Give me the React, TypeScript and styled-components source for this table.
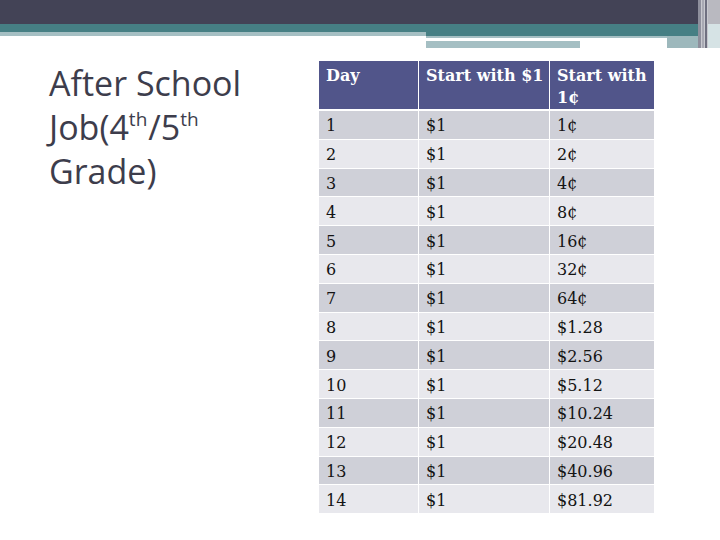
import React from "react";
import styled, { createGlobalStyle } from "styled-components";

const GlobalStyle = createGlobalStyle`
  html, body {
    margin: 0;
    padding: 0;
    background: #ffffff;
  }
  body {
    width: 720px;
    height: 540px;
    overflow: hidden;
  }
`;

const Slide = styled.div`
  width: 720px;
  height: 540px;
  background: #ffffff;
  display: flex;
  flex-direction: column;
`;

const Banner = styled.svg`
  display: block;
  width: 720px;
  height: 48px;
  flex: none;
`;

const Body = styled.main`
  display: grid;
  grid-template-columns: 270px 335px;
  padding: 13px 0 0 49px;
`;

const Title = styled.h1`
  margin: 0;
  width: 240px;
  font-family: "Open Sans", "DejaVu Sans", sans-serif;
  font-weight: 400;
  font-size: 34px;
  line-height: 44px;
  color: #3d3d4c;
`;

const Sup = styled.span`
  display: inline-block;
  font-size: 19px;
  line-height: 19px;
  vertical-align: 14px;
  margin-right: 1px;
`;

const Table = styled.div`
  display: grid;
  grid-template-columns: 99px 130px 104px;
  grid-template-rows: 49px;
  grid-auto-rows: 27.8px;
  column-gap: 1px;
  row-gap: 1px;
  align-content: start;
`;

const HeadCell = styled.div`
  align-self: start;
  height: 48px;
  box-sizing: border-box;
  padding: 4px 4px 0 7px;
  background: #51558a;
  color: #ffffff;
  font-family: "DejaVu Serif", "Liberation Serif", serif;
  font-weight: 700;
  font-size: 16px;
  line-height: 22px;
`;

const Cell = styled.div<{ $odd: boolean }>`
  display: flex;
  align-items: center;
  padding: 2px 7px 0;
  background: ${(p) => (p.$odd ? "#cfd0d8" : "#e8e8ed")};
  color: #141414;
  font-family: "DejaVu Serif", "Liberation Serif", serif;
  font-size: 16px;
`;

const TopBanner = () => (
  <Banner viewBox="0 0 720 48">
    <rect x="0" y="0" width="720" height="24" fill="#434356" />
    <rect x="0" y="24" width="720" height="8" fill="#467f84" />
    <rect x="0" y="32" width="426" height="4" fill="#a5bfc3" />
    <rect x="426" y="32" width="272" height="4" fill="#467f84" />
    <rect x="426" y="36" width="241" height="2" fill="#a5bfc3" />
    <rect x="426" y="38" width="241" height="3" fill="#ffffff" />
    <rect x="426" y="41" width="154" height="7" fill="#a5bfc3" />
    <rect x="667" y="36" width="31" height="12" fill="#9db8bc" />
    <rect x="698" y="0" width="22" height="48" fill="#c8c9cf" />
    <rect x="698" y="0" width="3" height="48" fill="#8e8f9c" />
    <rect x="702" y="0" width="2" height="48" fill="#a8a9b3" />
    <rect x="705" y="0" width="2" height="48" fill="#6f7080" />
    <rect x="708" y="0" width="12" height="24" fill="#b9b9c0" />
    <rect x="708" y="24" width="12" height="24" fill="#d6e3e5" />
  </Banner>
);

const penny = (day: number) => {
  const cents = Math.pow(2, day - 1);
  return cents < 100 ? `${cents}¢` : `$${(cents / 100).toFixed(2)}`;
};

const days = Array.from({ length: 14 }, (_, i) => i + 1);

export default function App() {
  return (
    <>
      <GlobalStyle />
      <Slide>
        <TopBanner />
        <Body>
          <Title>
            After School Job(4<Sup>th</Sup>/5<Sup>th</Sup> Grade)
          </Title>
          <Table>
            <HeadCell>Day</HeadCell>
            <HeadCell>Start with $1</HeadCell>
            <HeadCell>Start with 1¢</HeadCell>
            {days.map((d) => (
              <React.Fragment key={d}>
                <Cell $odd={d % 2 === 1}>{d}</Cell>
                <Cell $odd={d % 2 === 1}>$1</Cell>
                <Cell $odd={d % 2 === 1}>{penny(d)}</Cell>
              </React.Fragment>
            ))}
          </Table>
        </Body>
      </Slide>
    </>
  );
}
